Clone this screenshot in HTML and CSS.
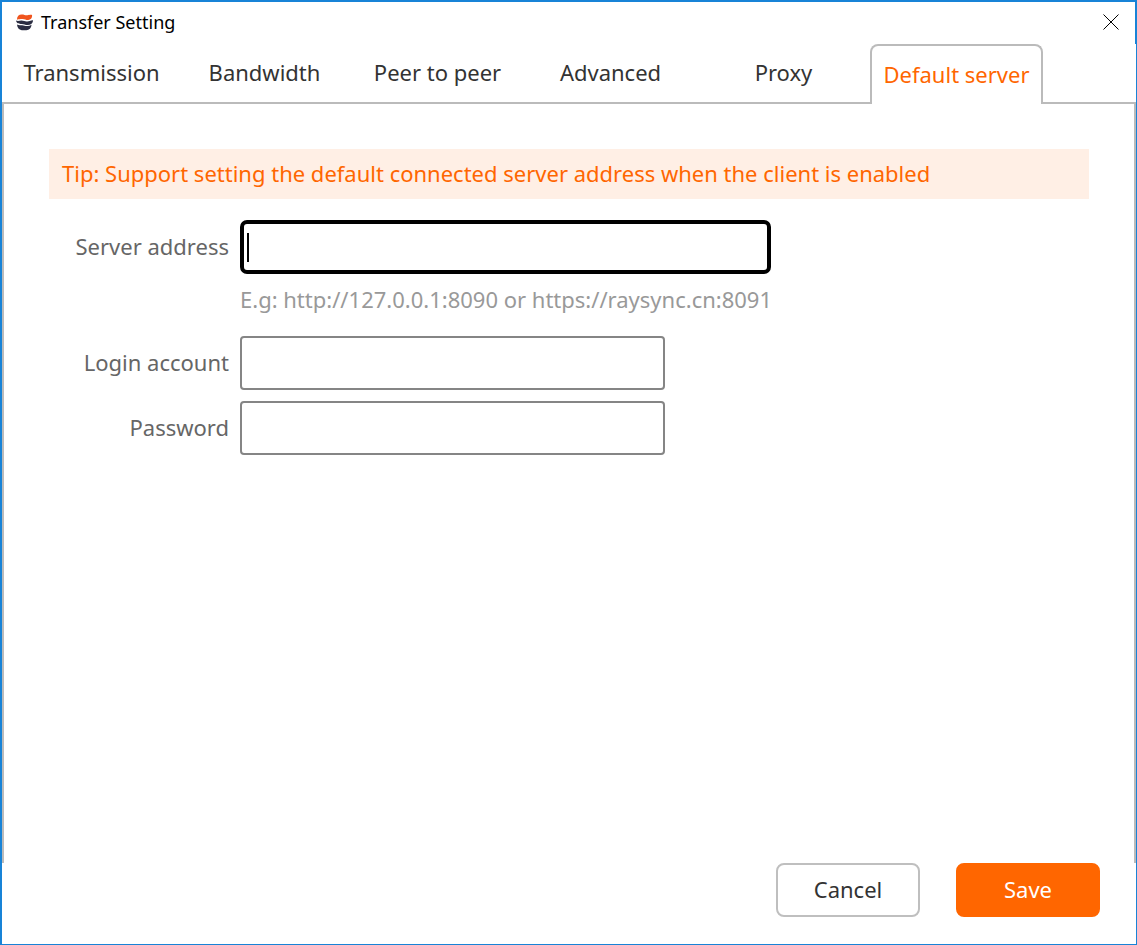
FILE: index.html
```html
<!DOCTYPE html>
<html lang="en">

<head>
    <meta charset="UTF-8">
    <meta name="viewport" content="width=device-width, initial-scale=1.0">
    <title>Transfer Setting</title>
    <link rel="stylesheet" href="styles.css">
</head>
<body>
    <div class="window">
        <header class="titlebar">
            <svg class="logo" viewBox="0 0 18 18" aria-hidden="true">
                <path fill="#f0551e" d="M1 6C1 2.500 3 .6 6 .6c3 0 3.500 1 6 .8 2-.2 3-.8 5-.4v1.500c0 2-1.500 3.700-4 3.800-2.500 .1-3.500-1.100-6-1.100C4.500 5.200 3 5.300 1 6z"/>
                <path fill="#2b2d42" d="M0 6.900c2 .8 3.400 .1 5.800 .1 2.500 0 3.700 1.200 6 1 2.200-.2 3.200-1.500 6.200-1.500v.8c-.5 2.900-2.500 4.300-5.500 4.400-2.600 .1-4-1.100-6.500-1.100C3 10.600 .6 10 0 6.900z"/>
                <path fill="#2b2d42" d="M1 11.200c2 .9 3.400 .5 5.500 .6 2.200 .1 3.300 1.100 5.500 .9 1.600-.1 3-.6 4.500-1.400-.4 3.600-2.500 5.800-5.500 5.800-2 0-2.800 .3-5 .1-3-.3-4.500-2.600-5-6z"/>
            </svg>
            <h1 class="title">Transfer Setting</h1>
            <button class="close" type="button" aria-label="Close">
                <svg viewBox="0 0 16 16" aria-hidden="true"><path d="M.5 .5l15 15M15.500 .5l-15 15"/></svg>
            </button>
        </header>
        <nav class="tabs">
            <button class="tab" type="button">Transmission</button>
            <button class="tab" type="button">Bandwidth</button>
            <button class="tab" type="button">Peer to peer</button>
            <button class="tab" type="button">Advanced</button>
            <button class="tab" type="button">Proxy</button>
            <button class="tab active" type="button">Default server</button>
        </nav>
        <main class="panel">
            <p class="tip">Tip: Support setting the default connected server address when the client is enabled</p>
            <form class="form" id="serverForm">
                <label for="server">Server address</label>
                <div class="field">
                    <input class="input current" type="text" id="server">
                    <span class="caret"></span>
                </div>
                <p class="hint">E.g: http://127.0.0.1:8090 or https://raysync.cn:8091</p>
                <label for="account">Login account</label>
                <input class="input" type="text" id="account">
                <label for="password">Password</label>
                <input class="input" type="password" id="password">
            </form>
        </main>
        <footer class="actions">
            <button class="btn" type="button">Cancel</button>
            <button class="btn save" type="submit" form="serverForm">Save</button>
        </footer>
    </div>
</body>
</html>
```
FILE: styles.css
```css
* {
    box-sizing: border-box;
}

body {
    margin: 0;
    background-color: #fff;
    font-family: "Noto Sans", "Open Sans", sans-serif;
    font-size: 22px;
    line-height: 30px;
    color: #333;
}

button,
input {
    font: inherit;
    color: inherit;
}

.window {
    display: flex;
    flex-direction: column;
    min-height: 100vh;
    border: 1px solid #1883d7;
    border-top-width: 2px;
    border-left-width: 2px;
}

.titlebar {
    display: flex;
    align-items: center;
    height: 42px;
    padding: 0 16px 2px 14px;
    border-right: 1px solid #1883d7;
}

.logo {
    width: 17px;
    height: 17px;
    margin-right: 8px;
}

.title {
    flex: 1;
    margin: 0;
    font-size: 18px;
    font-weight: normal;
    color: #000;
}

.close {
    display: flex;
    padding: 0;
    border: none;
    background: none;
    cursor: pointer;
}

.close svg {
    width: 16px;
    height: 16px;
    stroke: #000;
}

.tabs {
    display: flex;
    padding-left: 3px;
    margin-bottom: -2px;
}

.tab {
    width: 173px;
    height: 60px;
    padding: 0 0 4px;
    border: none;
    background: none;
    white-space: nowrap;
    cursor: pointer;
}

.tab.active {
    position: relative;
    padding-bottom: 2px;
    border: 2px solid #bbb;
    border-bottom: none;
    border-radius: 8px 8px 0 0;
    background-color: #fff;
    color: #ff6600;
}

.panel {
    flex: 1;
    padding: 45px;
    border: 2px solid #bbb;
    border-bottom: none;
}

.tip {
    margin: 0 0 21px;
    padding: 9px 13px 11px;
    background-color: #ffefe5;
    color: #ff6600;
}

.form {
    display: grid;
    grid-template-columns: 180px 1fr;
    column-gap: 11px;
    align-items: center;
}

.form label {
    margin-bottom: 13px;
    text-align: right;
    color: #666;
}

.field {
    position: relative;
}

.input {
    display: block;
    width: 425px;
    height: 54px;
    margin-bottom: 11px;
    padding: 0 6px;
    border: 2px solid #858585;
    border-radius: 4px;
    background-color: #fff;
    outline: none;
}

.input.current {
    width: 531px;
    margin-bottom: 10px;
    border: 4px solid #000;
    border-radius: 7px;
    caret-color: transparent;
}

.caret {
    position: absolute;
    top: 13px;
    left: 7px;
    width: 2px;
    height: 29px;
    background-color: #000;
}

.hint {
    grid-column: 2;
    margin: 0 0 22px;
    color: #999;
}

.actions {
    display: flex;
    justify-content: flex-end;
    gap: 36px;
    padding: 0 36px 27px;
}

.btn {
    width: 144px;
    height: 54px;
    padding: 0 0 2px;
    border: 2px solid #bfbfbf;
    border-radius: 8px;
    background-color: #fff;
    cursor: pointer;
}

.btn.save {
    border-color: #ff6600;
    background-color: #ff6600;
    color: #fff;
}
```
